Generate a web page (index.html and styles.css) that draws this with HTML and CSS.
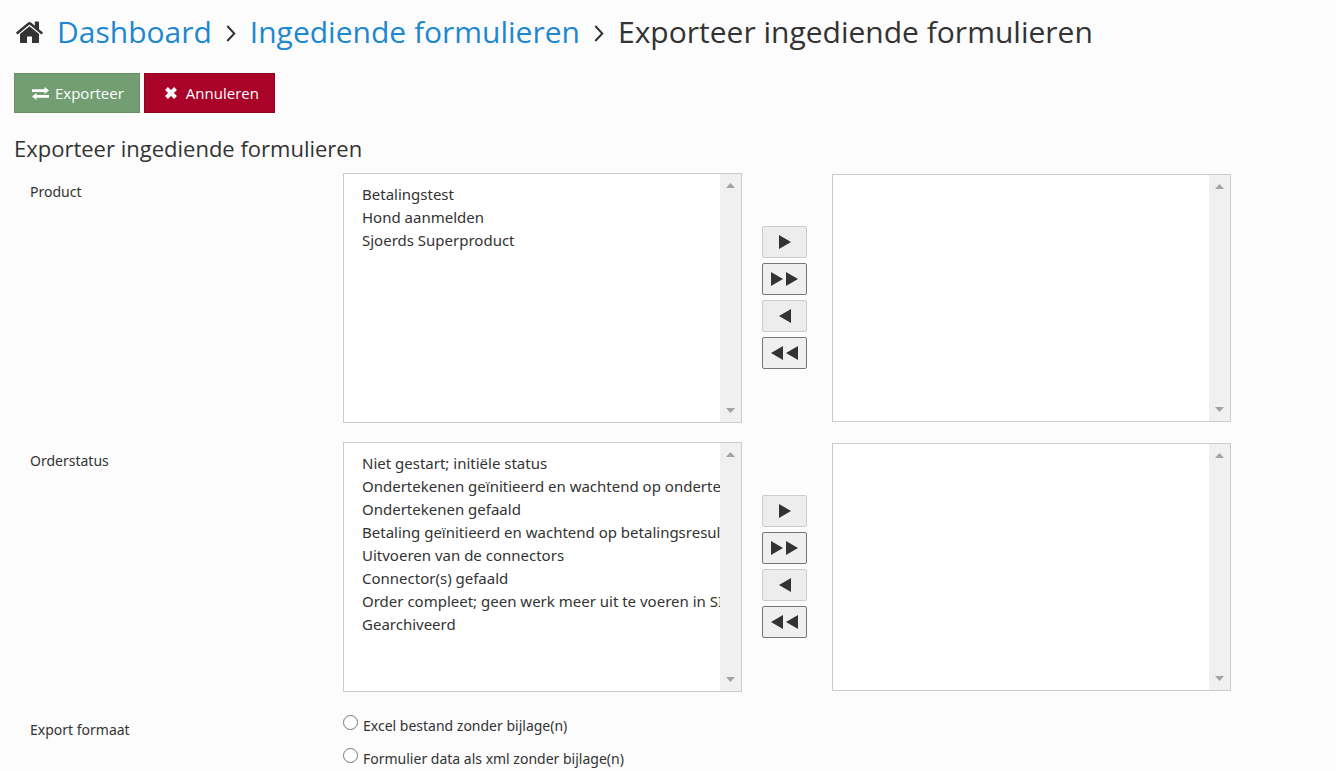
FILE: index.html
```html
<!DOCTYPE html>
<html lang="nl">
<head>
<meta charset="utf-8">
<title>Exporteer ingediende formulieren</title>
<link rel="stylesheet" href="styles.css">
</head>
<body>
<header>
  <nav class="breadcrumb" aria-label="Kruimelpad">
    <svg class="home" viewBox="0 0 27 22" aria-hidden="true"><path d="M13.5 5.2 4 13v8c0 .6.4 1 1 1h6v-6.5h5V22h6c.6 0 1-.4 1-1v-8z"/><path d="M26.700 11.300 23 8.200V1.200c0-.4-.2-.6-.6-.6h-3c-.4 0-.6.2-.6.6v3.500L15 1.500c-.9-.7-2.100-.7-3 0L.3 11.300c-.2.200-.3.500-.1.800l.9 1.100c.2.200.5.200.8 0L13.500 3.500l11.600 9.700c.3.200.6.200.8 0l.9-1.100c.2-.3.100-.6-.1-.8z"/></svg>
    <a href="#">Dashboard</a>
    <svg class="sep" viewBox="0 0 10 17" aria-hidden="true"><path d="M1.300 1 8.300 8.500 1.300 16"/></svg>
    <a href="#">Ingediende formulieren</a>
    <svg class="sep" viewBox="0 0 10 17" aria-hidden="true"><path d="M1.300 1 8.300 8.500 1.300 16"/></svg>
    <span>Exporteer ingediende formulieren</span>
  </nav>
</header>
<main>
  <form class="export">
    <div class="actions">
      <button type="submit" class="btn btn-export"><svg class="swap" viewBox="0 0 17 13" aria-hidden="true"><path d="M0 2.200h12.500V0L17 3.500 12.500 7V5H0zM17 8H4.500V6L0 9.500 4.500 13v-2.200H17z"/></svg>Exporteer</button>
      <button type="button" class="btn btn-cancel"><svg class="cross" viewBox="0 0 12 12" aria-hidden="true"><path d="m1.500 1.500 9 9m0-9-9 9"/></svg>Annuleren</button>
    </div>
    <h2>Exporteer ingediende formulieren</h2>
    <div class="row">
      <label class="name" for="product">Product</label>
      <div class="dual">
        <div class="listbox">
          <select id="product" class="list" multiple>
            <option>Betalingstest</option>
            <option>Hond aanmelden</option>
            <option>Sjoerds Superproduct</option>
          </select>
          <div class="track" aria-hidden="true"><svg viewBox="0 0 9 5"><path d="M0 5 4.500 0 9 5z"/></svg><svg viewBox="0 0 9 5"><path d="M0 0 4.500 5 9 0z"/></svg></div>
        </div>
        <div class="moves">
          <button type="button" class="move soft" aria-label="Selectie toevoegen"><svg viewBox="0 0 12 14"><path d="M0 0v14l12-7z"/></svg></button>
          <button type="button" class="move" aria-label="Alles toevoegen"><svg viewBox="0 0 12 14"><path d="M0 0v14l12-7z"/></svg><svg viewBox="0 0 12 14"><path d="M0 0v14l12-7z"/></svg></button>
          <button type="button" class="move soft" aria-label="Selectie verwijderen"><svg viewBox="0 0 12 14"><path d="M12 0v14L0 7z"/></svg></button>
          <button type="button" class="move" aria-label="Alles verwijderen"><svg viewBox="0 0 12 14"><path d="M12 0v14L0 7z"/></svg><svg viewBox="0 0 12 14"><path d="M12 0v14L0 7z"/></svg></button>
        </div>
        <div class="listbox chosen">
          <select class="list" multiple aria-label="Gekozen producten"></select>
          <div class="track" aria-hidden="true"><svg viewBox="0 0 9 5"><path d="M0 5 4.500 0 9 5z"/></svg><svg viewBox="0 0 9 5"><path d="M0 0 4.500 5 9 0z"/></svg></div>
        </div>
      </div>
    </div>
    <div class="row">
      <label class="name" for="status">Orderstatus</label>
      <div class="dual">
        <div class="listbox">
          <select id="status" class="list" multiple>
            <option>Niet gestart; initiële status</option>
            <option>Ondertekenen geïnitieerd en wachtend op ondertekening</option>
            <option>Ondertekenen gefaald</option>
            <option>Betaling geïnitieerd en wachtend op betalingsresultaat</option>
            <option>Uitvoeren van de connectors</option>
            <option>Connector(s) gefaald</option>
            <option>Order compleet; geen werk meer uit te voeren in SIM</option>
            <option>Gearchiveerd</option>
          </select>
          <div class="track" aria-hidden="true"><svg viewBox="0 0 9 5"><path d="M0 5 4.500 0 9 5z"/></svg><svg viewBox="0 0 9 5"><path d="M0 0 4.500 5 9 0z"/></svg></div>
        </div>
        <div class="moves">
          <button type="button" class="move soft" aria-label="Selectie toevoegen"><svg viewBox="0 0 12 14"><path d="M0 0v14l12-7z"/></svg></button>
          <button type="button" class="move" aria-label="Alles toevoegen"><svg viewBox="0 0 12 14"><path d="M0 0v14l12-7z"/></svg><svg viewBox="0 0 12 14"><path d="M0 0v14l12-7z"/></svg></button>
          <button type="button" class="move soft" aria-label="Selectie verwijderen"><svg viewBox="0 0 12 14"><path d="M12 0v14L0 7z"/></svg></button>
          <button type="button" class="move" aria-label="Alles verwijderen"><svg viewBox="0 0 12 14"><path d="M12 0v14L0 7z"/></svg><svg viewBox="0 0 12 14"><path d="M12 0v14L0 7z"/></svg></button>
        </div>
        <div class="listbox chosen">
          <select class="list" multiple aria-label="Gekozen orderstatussen"></select>
          <div class="track" aria-hidden="true"><svg viewBox="0 0 9 5"><path d="M0 5 4.500 0 9 5z"/></svg><svg viewBox="0 0 9 5"><path d="M0 0 4.500 5 9 0z"/></svg></div>
        </div>
      </div>
    </div>
    <div class="row" role="radiogroup" aria-labelledby="format">
      <span class="name" id="format">Export formaat</span>
      <div class="choices">
        <div class="choice"><input type="radio" name="format" id="excel"><label for="excel">Excel bestand zonder bijlage(n)</label></div>
        <div class="choice"><input type="radio" name="format" id="xml"><label for="xml">Formulier data als xml zonder bijlage(n)</label></div>
      </div>
    </div>
  </form>
</main>
</body>
</html>
```
FILE: styles.css
```css
* { box-sizing: border-box; }
html { overflow-x: hidden; }
body {
  margin: 0;
  background: #fcfcfc;
  color: #333;
  font: 14px/20px "Noto Sans", "Open Sans", sans-serif;
}
.breadcrumb {
  display: flex;
  align-items: center;
  padding: 12px 16px 0;
  font: 30px/40px "Open Sans", sans-serif;
  white-space: nowrap;
}
.breadcrumb a { color: #1e87d2; text-decoration: none; }
.home { width: 27px; height: 22px; margin-right: 14px; fill: #333; }
.sep { width: 10px; height: 17px; margin: 2px 14px 0; fill: none; stroke: #333; stroke-width: 2; }
.export { padding: 21px 14px 0; }
.actions { display: flex; gap: 4px; }
.btn {
  display: flex;
  align-items: center;
  height: 40px;
  padding: 0 15px 0 17px;
  border: 1px solid;
  color: #fff;
  font: 15px/20px "Open Sans", sans-serif;
}
.btn-export { background: #739e73; border-color: #659265; }
.btn-cancel { background: #a90329; border-color: #900323; }
.swap { width: 17px; height: 13px; margin-right: 6px; fill: #fff; }
.cross { width: 12px; height: 12px; margin: 0 9px 0 3px; stroke: #fff; stroke-width: 4; }
h2 { margin: 20px 0 9px; font: 400 22px/31px "Open Sans", sans-serif; }
.row {
  display: grid;
  grid-template-columns: 313px 1fr;
  padding: 0 91px 0 16px;
  margin-bottom: 19px;
}
.row:last-child { margin-bottom: 0; }
.name { padding-top: 9px; }
.dual {
  display: grid;
  grid-template-columns: 1fr 90px 1fr;
  align-items: center;
}
.listbox {
  display: flex;
  min-width: 0;
  height: 250px;
  border: 1px solid #ccc;
  background: #fff;
}
.listbox.chosen { height: 248px; }
.list {
  flex: 1;
  min-width: 0;
  margin: 0;
  padding: 10px 0 10px 16px;
  overflow: hidden;
  border: 0;
  border-radius: 0;
  background: #fff;
  color: #333;
  font: 15px/23px "Noto Sans", "Open Sans", sans-serif;
}
.list option { min-height: 23px; padding: 0 2px; line-height: 23px; }
.track {
  display: flex;
  flex-direction: column;
  justify-content: space-between;
  align-items: center;
  width: 21px;
  padding: 9px 0;
  background: #f0f0f0;
}
.track svg { width: 9px; height: 5px; fill: #a3a3a3; }
.moves {
  display: flex;
  flex-direction: column;
  gap: 5px;
  padding: 0 0 2px 20px;
}
.move {
  display: flex;
  align-items: center;
  justify-content: center;
  gap: 3px;
  width: 45px;
  height: 32px;
  padding: 0;
  border: 1px solid #767676;
  border-radius: 2px;
  background: #efefef;
}
.move.soft { border-color: #ccc; background: #ededed; }
.move svg { width: 12px; height: 14px; fill: #333; }
.choices { display: flex; flex-direction: column; gap: 12px; padding-top: 4px; }
.choice { display: flex; align-items: flex-start; gap: 5px; }
.choice label { padding-top: 1px; }
.choice input {
  appearance: none;
  width: 15px;
  height: 15px;
  margin: 0;
  border: 1px solid #767676;
  border-radius: 50%;
  background: #fff;
}
```
